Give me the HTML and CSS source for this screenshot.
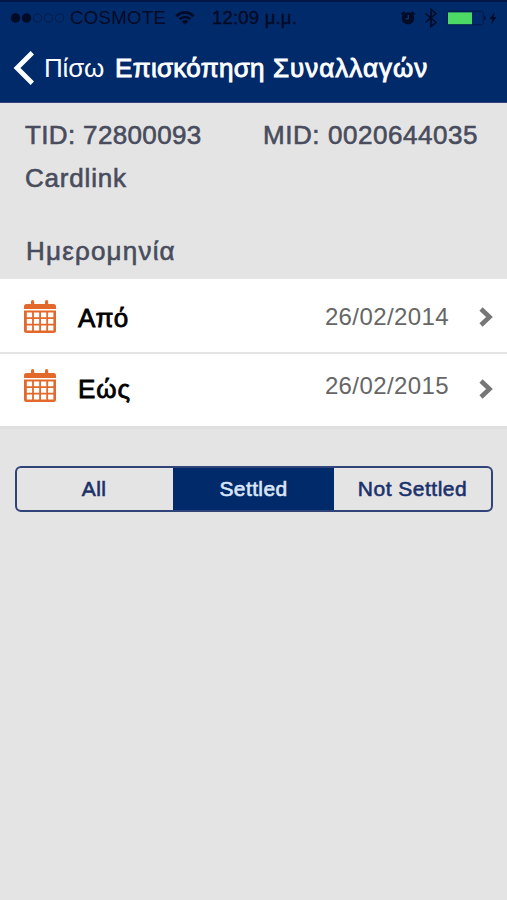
FILE: index.html
```html
<!DOCTYPE html>
<html lang="el">
<head>
<meta charset="utf-8">
<title>Επισκόπηση Συναλλαγών</title>
<link rel="stylesheet" href="styles.css">
</head>
<body>
<header class="header">
  <div class="status">
    <svg class="signal" width="55" height="12" viewBox="0 0 55 12"><circle cx="5.5" cy="6" r="4.7"/><circle cx="16.5" cy="6" r="4.7"/><g class="empty"><circle cx="27.5" cy="6" r="4.2"/><circle cx="38.5" cy="6" r="4.2"/><circle cx="49.5" cy="6" r="4.2"/></g></svg>
    <span class="carrier">COSMOTE</span>
    <svg class="wifi" width="20" height="14" viewBox="0 0 20 14"><path d="M1.2 5.2Q10-2.4 18.8 5.2M4.4 8.3Q10 3.6 15.6 8.3" fill="none" stroke="#020b25" stroke-width="2.5"/><path d="M6.6 10.3Q10 7.6 13.4 10.3L10 13.8Z"/></svg>
    <span class="time">12:09 μ.μ.</span>
    <span class="indicators">
      <svg width="16" height="16" viewBox="0 0 16 16"><circle cx="8" cy="8.4" r="6.2"/><path d="M1.500 4.500L4.500 2M14.500 4.500L11.500 2" stroke="#020b25" stroke-width="2"/><path d="M8.300 5v3.800H5.500" fill="none" stroke="#14346b" stroke-width="1.300"/></svg>
      <svg class="bluetooth" width="14" height="20" viewBox="0 0 14 20"><path d="M1.500 5.500L12 14.500L7 18.500V1.500L12 5.500L1.500 14.500" fill="none" stroke="#020b25" stroke-width="1.600"/></svg>
      <svg class="battery" width="50" height="16" viewBox="0 0 50 16"><rect x=".7" y="1.200" width="35.600" height="13.600" rx="2" fill="none" stroke="#061946" stroke-width="1"/><rect x="1" y="2.400" width="24" height="11.800" fill="#4cd964"/><path d="M37.500 5.500q2.500 2.500 0 5zM47.500 2L42.500 9h3l-1.200 5.500L49.500 7h-3z"/></svg>
    </span>
  </div>
  <nav class="nav">
    <svg class="back" width="22" height="34" viewBox="0 0 22 34"><path d="M19.300 1.800L4 17L19.300 32.200" fill="none" stroke="#fff" stroke-width="4.800"/></svg>
    <span class="back-label">Πίσω</span>
    <h1 class="title"><span class="title-first">Επισκόπηση</span> Συναλλαγών</h1>
  </nav>
</header>
<main>
  <section class="info">
    <div class="ids"><span class="tid">TID: 72800093</span><span class="mid">MID: 0020644035</span></div>
    <div class="merchant">Cardlink</div>
    <h2 class="heading">Ημερομηνία</h2>
  </section>
  <section class="dates">
    <div class="row">
      <svg class="calendar" width="32" height="34" viewBox="0 0 32 34"><path d="M0 9V6.500Q0 4 2.500 4H7V1.500Q7 0 8.600 0T10.200 1.500V4H21V1.500Q21 0 22.600 0T24.200 1.500V4H29.500Q32 4 32 6.500V9Z"/><path fill-rule="evenodd" d="M0 10.500H32V30.500Q32 33 29.500 33H2.500Q0 33 0 30.500ZM2.800 12.500v4.700h5.300v-4.700zM9.900 12.500v4.700h5.300v-4.700zM17 12.500v4.700h5.300v-4.700zM24.100 12.500v4.700h5.300v-4.700zM2.800 19v4.800h5.300V19zM9.900 19v4.800h5.300V19zM17 19v4.800h5.300V19zM24.100 19v4.800h5.300V19zM2.800 25.600v5h5.300v-5zM9.900 25.600v5h5.300v-5zM17 25.600v5h5.300v-5zM24.100 25.600v5h5.300v-5z"/></svg>
      <span class="label">Από</span>
      <span class="date">26/02/2014</span>
      <svg class="chevron" width="14" height="20" viewBox="0 0 14 20"><path d="M2 2L10.500 10L2 18" fill="none" stroke="#777" stroke-width="4.600"/></svg>
    </div>
    <div class="row row-to">
      <svg class="calendar" width="32" height="34" viewBox="0 0 32 34"><path d="M0 9V6.500Q0 4 2.500 4H7V1.500Q7 0 8.600 0T10.200 1.500V4H21V1.500Q21 0 22.600 0T24.200 1.500V4H29.500Q32 4 32 6.500V9Z"/><path fill-rule="evenodd" d="M0 10.500H32V30.500Q32 33 29.500 33H2.500Q0 33 0 30.500ZM2.800 12.500v4.700h5.300v-4.700zM9.900 12.500v4.700h5.300v-4.700zM17 12.500v4.700h5.300v-4.700zM24.100 12.500v4.700h5.300v-4.700zM2.800 19v4.800h5.300V19zM9.900 19v4.800h5.300V19zM17 19v4.800h5.300V19zM24.100 19v4.800h5.300V19zM2.800 25.600v5h5.300v-5zM9.900 25.600v5h5.300v-5zM17 25.600v5h5.300v-5zM24.100 25.600v5h5.300v-5z"/></svg>
      <span class="label">Εώς</span>
      <span class="date">26/02/2015</span>
      <svg class="chevron" width="14" height="20" viewBox="0 0 14 20"><path d="M2 2L10.500 10L2 18" fill="none" stroke="#777" stroke-width="4.600"/></svg>
    </div>
  </section>
  <div class="segments">
    <span class="segment">All</span>
    <span class="segment active">Settled</span>
    <span class="segment last">Not Settled</span>
  </div>
</main>
</body>
</html>
```
FILE: styles.css
```css
* { box-sizing: border-box; }
body {
  margin: 0;
  height: 900px;
  overflow: hidden;
  background: #e4e4e4;
  font-family: "Liberation Sans", Arial, sans-serif;
  white-space: nowrap;
}
svg { display: block; flex: none; }
h1, h2 { margin: 0; font-weight: 400; }

.header {
  height: 103px;
  background: #012a6a;
  border-top: 2px solid #011648;
  border-bottom: 1px solid #33427c;
}
.status {
  display: flex;
  align-items: center;
  height: 32px;
  padding-left: 10px;
  color: #020b25;
  fill: #020b25;
  font-size: 18.5px;
}
.signal .empty { fill: none; stroke: #061c4c; stroke-width: 1; }
.carrier { width: 96px; margin-left: 5px; letter-spacing: .4px; }
.wifi { margin-left: 9px; }
.time { margin-left: 17px; letter-spacing: .2px; -webkit-text-stroke: .4px; }
.indicators { display: flex; align-items: center; margin-left: auto; padding-right: 10px; }
.bluetooth { margin-left: 8px; }
.battery { margin-left: 9px; }

.nav {
  display: flex;
  align-items: center;
  height: 68px;
  padding-left: 13px;
  color: #fff;
  font-size: 26px;
  line-height: 30px;
}
.back-label { width: 62px; margin-left: 9px; letter-spacing: -.2px; }
.title { margin-left: 9px; font-size: 26px; letter-spacing: 1px; -webkit-text-stroke: .9px; }
.title-first { letter-spacing: .3px; }

.info {
  height: 176px;
  padding: 17px 29px 0 25px;
  color: #484c5c;
  font-size: 26px;
  line-height: 30px;
  -webkit-text-stroke: .6px;
}
.ids { display: flex; justify-content: space-between; }
.tid { letter-spacing: .35px; }
.mid { letter-spacing: .55px; }
.merchant { margin-top: 13px; letter-spacing: .8px; }
.heading { margin: 43px 0 0 1px; font-size: 26px; letter-spacing: 1.2px; }

.dates { border-bottom: 3px solid #dfdfdf; }
.row {
  display: flex;
  align-items: center;
  height: 73px;
  padding: 3px 14px 0 24px;
  background: #fff;
}
.row-to { height: 74px; padding-top: 0; padding-bottom: 3px; border-top: 2px solid #e4e4e4; }
.calendar { fill: #e2682b; }
.label { margin: 1px 0 0 22px; font-size: 26px; line-height: 30px; color: #000; letter-spacing: .2px; -webkit-text-stroke: .8px; }
.date { margin-left: auto; font-size: 24px; letter-spacing: .4px; color: #666; }
.chevron { margin-left: 30px; }
.row-to .calendar { margin-bottom: 5px; }
.row-to .label { letter-spacing: .9px; }
.row-to .date { margin-bottom: 5px; }

.segments {
  display: grid;
  grid-template-columns: 156px 161px 1fr;
  height: 46px;
  margin: 37px 14px 0 15px;
  border: 2px solid #314479;
  border-radius: 6px;
  overflow: hidden;
  color: #1b316b;
  font-size: 21px;
  -webkit-text-stroke: .6px;
}
.segment { display: flex; align-items: center; justify-content: center; padding: 0 2px 1px 0; letter-spacing: .4px; }
.active { padding-right: 0; background: #012a6a; color: #dce6f8; }
.last { padding-right: 0; letter-spacing: .5px; }
```
